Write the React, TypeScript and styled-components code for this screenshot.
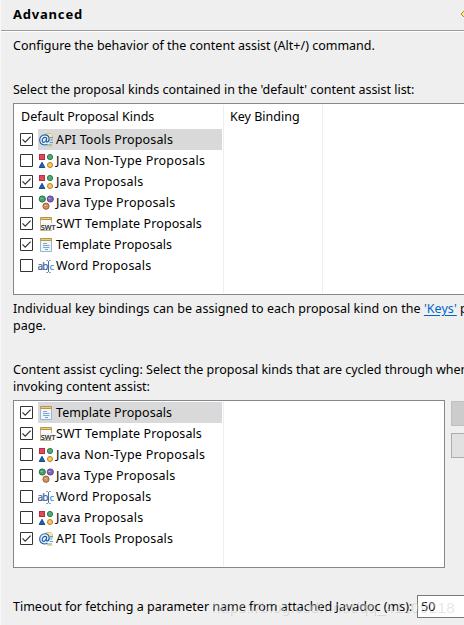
import React from 'react';
import styled, { createGlobalStyle } from 'styled-components';

const Global = createGlobalStyle`
  *{box-sizing:border-box}
  html,body{margin:0;width:464px;height:625px;overflow:hidden;background:#efefef}
  body{font:12.5px/17px "Noto Sans","Noto Sans CJK SC",sans-serif;color:#000}
`;
const Page = styled.main`position:relative;width:464px;height:625px;overflow:hidden;background:#efefef;border-left:1px solid #f8f8f8;`;
const Header = styled.header`height:31px;display:flex;align-items:flex-start;justify-content:space-between;padding:6px 0 0 12px;border-bottom:1px solid #9c9c9c;box-shadow:0 1px #fff;overflow:hidden;`;
const Title = styled.h1`margin:0;font:bold 13px/17px "Noto Sans",sans-serif;letter-spacing:.8px;`;
const Arrow = styled.svg`display:block;width:4px;height:10px;margin-top:3px;`;
const Content = styled.div`padding-left:12px;`;
const Line = styled.p<{ $ls?: number }>`margin:0;height:17px;white-space:nowrap;letter-spacing:${p => p.$ls ?? 0}px;`;
const Gap = styled.div<{ $h: number }>`height:${p => p.$h}px;`;
const Link = styled.a`color:#0066cc;text-decoration:underline;text-underline-offset:2px;`;
const Table = styled.div<{ $h: number; $w: number }>`width:${p => p.$w}px;height:${p => p.$h}px;flex:none;border:1px solid #828790;background:#fff;display:grid;grid-template-columns:209px 99px 1fr;padding:1px 0 1px 1px;`;
const Column = styled.div`border-right:1px solid #e8eff8;`;
const Head = styled.div`height:24px;padding:3px 0 0 6px;white-space:nowrap;`;
const Row = styled.div`height:21px;display:flex;align-items:center;padding:0 1px 0 5px;`;
const Box = styled.svg`display:block;width:13px;height:13px;flex:none;margin-right:5px;`;
const Label = styled.div<{ $sel?: boolean; $ls: number }>`height:21px;flex:1;display:flex;align-items:center;background:${p => p.$sel ? '#d9d9d9' : 'transparent'};white-space:nowrap;letter-spacing:${p => p.$ls}px;`;
const Icon = styled.svg`display:block;width:18px;height:16px;flex:none;font-family:"Noto Sans",sans-serif;letter-spacing:0;`;
const Cycle = styled.div`display:flex;gap:6px;`;
const Buttons = styled.div`padding-top:1px;display:flex;flex-direction:column;gap:7px;flex:none;`;
const Button = styled.button<{ $off?: boolean }>`width:80px;height:25px;padding:0;border:1px solid ${p => p.$off ? '#bfbfbf' : '#adadad'};background:${p => p.$off ? '#ccc' : '#e1e1e1'};`;
const Footer = styled.div`display:flex;align-items:center;height:23px;`;
const Input = styled.div`width:100px;height:23px;border:1px solid #7a7a7a;background:#fff;padding:2px 3px;flex:none;`;
const FieldLabel = styled(Line)`width:404px;flex:none;`;
const Mark = styled.div`position:absolute;left:210px;top:597px;font:15px/20px "Liberation Sans",sans-serif;letter-spacing:.42px;color:rgba(255,255,255,.4);text-shadow:1px 1px rgba(130,130,130,.24);white-space:nowrap;pointer-events:none;`;

type Kind = 'api' | 'java' | 'type' | 'swt' | 'template' | 'word';
function KindIcon({ kind }: { kind: Kind }) {
  return <Icon viewBox="0 0 18 16">
    {kind === 'api' && <>
      <path d="M8 1.5h5l1.5 2V7H9z" fill="#f8e7b4" stroke="#d8b662" strokeWidth=".7" />
      <path d="M11 5.5h4M11 8h3.5M11 10.5h4M9 13h5" stroke="#5a9fbb" strokeWidth="1.2" />
      <path d="M10 13.5h3.5l1 1.3h-5.5z" fill="#e6c776" />
      <circle cx="6.8" cy="8" r="5.6" fill="#e8f4ff" />
      <path d="M8.8 6C6 4.4 4.1 6.7 4.2 8.7c.1 2.5 3 2 4-.6l.6-2.1c-.9 3.5-.5 4.4.6 4 2.7-1 2.6-7.2-2.4-7.2-6.8 0-7.2 10.2-.4 10.2 1.2 0 2-.2 2.8-.7" fill="none" stroke="#205f9e" strokeWidth="1.15" />
    </>}
    {kind === 'java' && <>
      <rect x="1.5" y="1.5" width="5" height="5" fill="#e04b5c" stroke="#b92d40" />
      <circle cx="12" cy="4" r="2.6" fill="#58a878" stroke="#23804d" />
      <path d="M4 9.3 6.8 14.5H1.2z" fill="#2461a9" stroke="#184b8c" />
      <circle cx="12" cy="12" r="2.5" fill="#f4cd68" stroke="#bd7a13" />
    </>}
    {kind === 'type' && <>
      <circle cx="4.3" cy="4" r="3.1" fill="#4e9d71" stroke="#247b46" />
      <circle cx="12.3" cy="4" r="3.1" fill="#8066b2" stroke="#604192" />
      <circle cx="8" cy="11.2" r="3.1" fill="#cf9363" stroke="#a65b28" />
      <path d="M2.5 3.5h2M10.5 3.5h2M6.5 10.5h2" stroke="#fff" strokeOpacity=".45" />
    </>}
    {kind === 'template' && <>
      <path d="M2.5 2.5h11v12h-11z" fill="#edf6fc" stroke="#9bb4cc" />
      <path d="M2.5 1.5h11v2h-11z" fill="#eccb82" stroke="#bd9444" />
      <path d="M5 6.5h4M5 8.5h6.5M5 10.5h6.5M7 12.5h3" stroke="#7ea3c9" />
    </>}
    {kind === 'swt' && <>
      <path d="M2.5 2.5h11v12h-11z" fill="#fafafa" stroke="#c4b589" />
      <path d="M2.5 1.5h11v2h-11z" fill="#eccb82" stroke="#bd9444" />
      <path d="M4 7h12v7H4z" fill="#f4f4f4" />
      <text x="2.8" y="13.5" fontSize="7.2" stroke="#222" strokeWidth=".2" fill="#222">SWT</text>
    </>}
    {kind === 'word' && <>
      <text x="-.4" y="12" fontSize="10" letterSpacing="-1" stroke="#3b5d9c" strokeWidth=".2" fill="#3b5d9c">ab</text>
      <path d="M8.5 2.5h1l1 1 1-1h1M10.5 3.5v10M8.5 14.5h1l1-1 1 1h1" fill="none" stroke="#385f91" strokeWidth=".9" />
      <text x="11.5" y="12" fontSize="9.5" letterSpacing="-1" stroke="#3498df" strokeWidth=".2" fill="#3498df">c</text>
    </>}
  </Icon>;
}
type Item = { kind: Kind; text: string; ls: number };
const api: Item = { kind: 'api', text: 'API Tools Proposals', ls: .15 };
const non: Item = { kind: 'java', text: 'Java Non-Type Proposals', ls: .23 };
const java: Item = { kind: 'java', text: 'Java Proposals', ls: .2 };
const typ: Item = { kind: 'type', text: 'Java Type Proposals', ls: .2 };
const swt: Item = { kind: 'swt', text: 'SWT Template Proposals', ls: .1 };
const tpl: Item = { kind: 'template', text: 'Template Proposals', ls: .06 };
const word: Item = { kind: 'word', text: 'Word Proposals', ls: .23 };

function ItemRow({ item, on, sel }: { item: Item; on?: boolean; sel?: boolean }) {
  return <Row>
    <Box viewBox="0 0 13 13"><path d="M.5.5h12v12H.5z" fill="#fff" stroke="#333" />{on && <path d="m2.5 6.4 2.7 2.8 5.4-5.5" fill="none" stroke="#333" strokeWidth="1.2" />}</Box>
    <Label $sel={sel} $ls={item.ls}><KindIcon kind={item.kind} />{item.text}</Label>
  </Row>;
}

export default function App() {
  return <><Global /><Page>
    <Header><Title>Advanced</Title><Arrow viewBox="0 0 4 10"><path d="M5 1 1 5l4 4" fill="#ffe7a5" stroke="#bd8516" /></Arrow></Header>
    <Content>
      <Gap $h={6} />
      <Line>Configure the behavior of the content assist (Alt+/) command.</Line>
      <Gap $h={27} />
      <Line $ls={-.02}>Select the proposal kinds contained in the 'default' content assist list:</Line>
      <Gap $h={5} />
      <Table $w={470} $h={192}>
        <Column><Head>Default Proposal Kinds</Head>
          <ItemRow item={api} on sel /><ItemRow item={non} /><ItemRow item={java} on /><ItemRow item={typ} /><ItemRow item={swt} on /><ItemRow item={tpl} on /><ItemRow item={word} />
        </Column>
        <Column><Head>Key Binding</Head></Column>
      </Table>
      <Gap $h={5} />
      <Line $ls={.055}>Individual key bindings can be assigned to each proposal kind on the <Link>'Keys'</Link> preference</Line>
      <Line>page.</Line>
      <Gap $h={27} />
      <Line>Content assist cycling: Select the proposal kinds that are cycled through when</Line>
      <Line $ls={-.04}>invoking content assist:</Line>
      <Gap $h={5} />
      <Cycle>
        <Table $w={432} $h={168}>
          <Column><ItemRow item={tpl} on sel /><ItemRow item={swt} on /><ItemRow item={non} /><ItemRow item={typ} /><ItemRow item={word} /><ItemRow item={java} /><ItemRow item={api} on /></Column>
        </Table>
        <Buttons><Button $off /><Button /></Buttons>
      </Cycle>
      <Gap $h={27} />
      <Footer><FieldLabel>Timeout for fetching a parameter name from attached Javadoc (ms):</FieldLabel><Input>50</Input></Footer>
    </Content>
    <Mark>https://blog.csdn.net/qq_41109218</Mark>
  </Page></>;
}
